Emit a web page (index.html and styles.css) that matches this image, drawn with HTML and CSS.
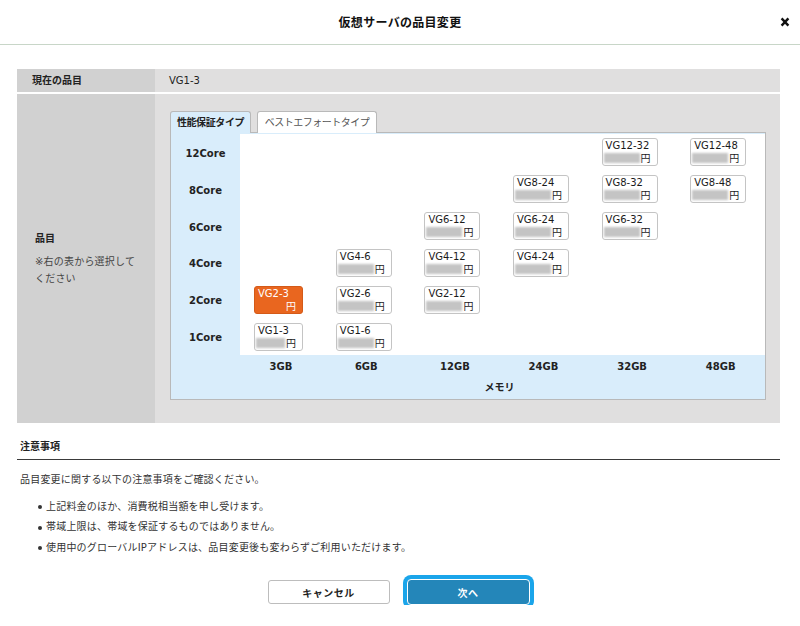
FILE: index.html
```html
<!DOCTYPE html>
<html lang="ja">
<head>
<meta charset="utf-8">
<title>仮想サーバの品目変更</title>
<link rel="stylesheet" href="styles.css">
</head>
<body>
<div class="dialog">
  <header class="dlg-head">
    <h1 class="dlg-title">仮想サーバの品目変更</h1>
    <button class="dlg-close" type="button" aria-label="閉じる">
      <svg width="10" height="10" viewBox="0 0 10 10"><path d="M1.6 1.4 L8.4 8.6 M8.4 1.4 L1.6 8.6" stroke="#111" stroke-width="2.4" stroke-linecap="butt" fill="none"/></svg>
    </button>
  </header>

  <main class="dlg-body">
    <div class="form-table">
      <div class="ft-row ft-row-current">
        <div class="ft-th">現在の品目</div>
        <div class="ft-td">VG1-3</div>
      </div>
      <div class="ft-row ft-row-select">
        <div class="ft-th ft-th-select">
          <div class="th-title">品目</div>
          <div class="th-note">※右の表から選択して<br>ください</div>
        </div>
        <div class="ft-td ft-td-select">
          <div class="tabs">
            <div class="tab tab-active">性能保証タイプ</div>
            <div class="tab tab-wide">ベストエフォートタイプ</div>
          </div>
          <div class="matrix">
            <div class="mx-row">
              <div class="mx-label">12Core</div>
              <div class="mx-cell"></div>
              <div class="mx-cell"></div>
              <div class="mx-cell"></div>
              <div class="mx-cell"></div>
              <div class="mx-cell"><div class="sku"><div class="sku-name">VG12-32</div><div class="sku-price"><span class="sku-blur"></span><span class="sku-yen">円</span></div></div></div>
              <div class="mx-cell"><div class="sku"><div class="sku-name">VG12-48</div><div class="sku-price"><span class="sku-blur"></span><span class="sku-yen">円</span></div></div></div>
            </div>
            <div class="mx-row">
              <div class="mx-label">8Core</div>
              <div class="mx-cell"></div>
              <div class="mx-cell"></div>
              <div class="mx-cell"></div>
              <div class="mx-cell"><div class="sku"><div class="sku-name">VG8-24</div><div class="sku-price"><span class="sku-blur"></span><span class="sku-yen">円</span></div></div></div>
              <div class="mx-cell"><div class="sku"><div class="sku-name">VG8-32</div><div class="sku-price"><span class="sku-blur"></span><span class="sku-yen">円</span></div></div></div>
              <div class="mx-cell"><div class="sku"><div class="sku-name">VG8-48</div><div class="sku-price"><span class="sku-blur"></span><span class="sku-yen">円</span></div></div></div>
            </div>
            <div class="mx-row">
              <div class="mx-label">6Core</div>
              <div class="mx-cell"></div>
              <div class="mx-cell"></div>
              <div class="mx-cell"><div class="sku"><div class="sku-name">VG6-12</div><div class="sku-price"><span class="sku-blur"></span><span class="sku-yen">円</span></div></div></div>
              <div class="mx-cell"><div class="sku"><div class="sku-name">VG6-24</div><div class="sku-price"><span class="sku-blur"></span><span class="sku-yen">円</span></div></div></div>
              <div class="mx-cell"><div class="sku"><div class="sku-name">VG6-32</div><div class="sku-price"><span class="sku-blur"></span><span class="sku-yen">円</span></div></div></div>
              <div class="mx-cell"></div>
            </div>
            <div class="mx-row">
              <div class="mx-label">4Core</div>
              <div class="mx-cell"></div>
              <div class="mx-cell"><div class="sku"><div class="sku-name">VG4-6</div><div class="sku-price"><span class="sku-blur"></span><span class="sku-yen">円</span></div></div></div>
              <div class="mx-cell"><div class="sku"><div class="sku-name">VG4-12</div><div class="sku-price"><span class="sku-blur"></span><span class="sku-yen">円</span></div></div></div>
              <div class="mx-cell"><div class="sku"><div class="sku-name">VG4-24</div><div class="sku-price"><span class="sku-blur"></span><span class="sku-yen">円</span></div></div></div>
              <div class="mx-cell"></div>
              <div class="mx-cell"></div>
            </div>
            <div class="mx-row">
              <div class="mx-label">2Core</div>
              <div class="mx-cell"><div class="sku sku-narrow sku-selected"><div class="sku-name">VG2-3</div><div class="sku-price"><span class="sku-blur"></span><span class="sku-yen">円</span></div></div></div>
              <div class="mx-cell"><div class="sku"><div class="sku-name">VG2-6</div><div class="sku-price"><span class="sku-blur"></span><span class="sku-yen">円</span></div></div></div>
              <div class="mx-cell"><div class="sku"><div class="sku-name">VG2-12</div><div class="sku-price"><span class="sku-blur"></span><span class="sku-yen">円</span></div></div></div>
              <div class="mx-cell"></div>
              <div class="mx-cell"></div>
              <div class="mx-cell"></div>
            </div>
            <div class="mx-row">
              <div class="mx-label">1Core</div>
              <div class="mx-cell"><div class="sku sku-narrow"><div class="sku-name">VG1-3</div><div class="sku-price"><span class="sku-blur"></span><span class="sku-yen">円</span></div></div></div>
              <div class="mx-cell"><div class="sku"><div class="sku-name">VG1-6</div><div class="sku-price"><span class="sku-blur"></span><span class="sku-yen">円</span></div></div></div>
              <div class="mx-cell"></div>
              <div class="mx-cell"></div>
              <div class="mx-cell"></div>
              <div class="mx-cell"></div>
            </div>
            <div class="mx-axis">
              <div class="mx-axis-blank"></div>
              <div class="mx-gb">3GB</div>
              <div class="mx-gb">6GB</div>
              <div class="mx-gb">12GB</div>
              <div class="mx-gb">24GB</div>
              <div class="mx-gb">32GB</div>
              <div class="mx-gb">48GB</div>
            </div>
            <div class="mx-axis mx-axis-caption">
              <div class="mx-axis-blank"></div>
              <div class="mx-caption">メモリ</div>
            </div>
          </div>
        </div>
      </div>
    </div>

    <section class="notes">
      <h2 class="notes-title">注意事項</h2>
      <p class="notes-lead">品目変更に関する以下の注意事項をご確認ください。</p>
      <ul class="notes-list">
        <li>上記料金のほか、消費税相当額を申し受けます。</li>
        <li>帯域上限は、帯域を保証するものではありません。</li>
        <li>使用中のグローバルIPアドレスは、品目変更後も変わらずご利用いただけます。</li>
      </ul>
    </section>

    <div class="actions">
      <button class="btn btn-cancel" type="button">キャンセル</button>
      <button class="btn btn-next" type="button">次へ</button>
    </div>
  </main>
</div>
</body>
</html>
```

FILE: styles.css
```css
* { box-sizing: border-box; }

html, body {
  margin: 0;
  padding: 0;
  background: #fff;
}

body {
  width: 800px;
  font-family: "DejaVu Sans", "Noto Sans CJK JP", sans-serif;
  font-size: 10px;
  color: #222;
}

/* header */
.dlg-head {
  height: 45px;
  border-bottom: 1px solid #c8d6c8;
  display: grid;
  grid-template-columns: 1fr auto 1fr;
  align-items: center;
}

.dlg-title {
  grid-column: 2;
  margin: 0;
  font-family: "Noto Sans CJK JP", sans-serif;
  font-size: 12px;
  font-weight: bold;
  letter-spacing: 0.3px;
  line-height: 16px;
  color: #111;
}

.dlg-close {
  grid-column: 3;
  justify-self: end;
  margin: -1px 10px 0 0;
  padding: 0;
  border: 0;
  background: none;
  width: 10px;
  height: 10px;
  display: flex;
}

/* body */
.dlg-body {
  padding: 24px 20px 0 17px;
}

.form-table {
  display: flex;
  flex-direction: column;
  gap: 2px;
}

.ft-row {
  display: grid;
  grid-template-columns: 138px 1fr;
}

.ft-th {
  background: #d1d1d1;
  font-weight: bold;
  padding-left: 15px;
}

.ft-td {
  background: #e0dfdf;
  padding-left: 14px;
}

.ft-row-current {
  height: 23px;
  line-height: 23px;
}

.ft-th-select {
  display: flex;
  flex-direction: column;
  justify-content: center;
  padding-left: 18px;
  font-weight: normal;
}

.th-title {
  font-weight: bold;
  line-height: 17px;
  margin-bottom: 6px;
}

.th-note {
  line-height: 17px;
  color: #444;
  letter-spacing: 0.2px;
}

.ft-td-select {
  padding: 17px 14px 23px 15px;
}

/* tabs */
.tabs {
  display: flex;
  gap: 6px;
  height: 22px;
  margin-bottom: -1px;
  position: relative;
  z-index: 1;
}

.tab {
  width: 120px;
  height: 22px;
  border: 1px solid #b9b9b9;
  border-bottom: 0;
  border-radius: 3px 3px 0 0;
  background: #fff;
  color: #555;
  text-align: center;
  line-height: 21px;
  letter-spacing: -0.5px;
}

.tab-active {
  width: 81px;
  background: #d9edfb;
  color: #222;
  font-weight: bold;
  letter-spacing: -0.4px;
}

/* matrix */
.matrix {
  border: 1px solid #b9b9b9;
  background: #d9edfb;
  padding-top: 1px;
}

.mx-row,
.mx-axis {
  display: grid;
  grid-template-columns: 69px 82px repeat(5, 1fr);
}

.mx-row {
  height: 36.84px;
}

.mx-label {
  display: flex;
  align-items: center;
  justify-content: center;
  font-weight: bold;
  padding-top: 2px;
}

.mx-cell {
  background: #fff;
  display: flex;
  align-items: center;
  justify-content: center;
  padding-right: 5px;
}

.mx-axis {
  height: 23px;
  align-items: center;
}

.mx-gb {
  text-align: center;
  font-weight: bold;
}

.mx-axis-caption {
  height: 18px;
  margin-bottom: 3px;
}

.mx-caption {
  grid-column: 2 / -1;
  text-align: center;
  font-weight: bold;
  padding-right: 6px;
}

/* sku buttons */
.sku {
  width: 56px;
  height: 28px;
  border: 1px solid #c4c4c4;
  border-radius: 3px;
  background: #fff;
  padding: 1px 0;
  color: #1a1a1a;
}

.sku-narrow {
  width: 49px;
}

.sku-name {
  padding-left: 3px;
  line-height: 12px;
  white-space: nowrap;
}

.sku-price {
  display: flex;
  align-items: center;
  height: 12px;
  padding: 0 6px 0 1px;
}

.sku-blur {
  flex: 1;
  height: 10px;
  background: #c4c4c4;
  filter: blur(0.8px);
  margin-right: 1px;
}

.sku-yen {
  font-family: "Noto Sans CJK JP", sans-serif;
  line-height: 12px;
}

.sku-selected {
  background: #e9661f;
  border-color: #d45a18;
  color: #fff;
}

.sku-selected .sku-blur {
  background: transparent;
}

/* notes */
.notes {
  margin-top: 16px;
  color: #333;
}

.notes-title {
  margin: 0;
  font-size: 10px;
  font-weight: bold;
  line-height: 16px;
  padding: 0 3px 4px;
  border-bottom: 1px solid #3a3a3a;
  color: #222;
}

.notes-lead {
  margin: 10px 0 0 3px;
  line-height: 20px;
  letter-spacing: 0.2px;
}

.notes-list {
  list-style: none;
  margin: 7px 0 0;
  padding-left: 21px;
}

.notes-list li {
  display: flex;
  align-items: center;
  gap: 4px;
  line-height: 20.5px;
  letter-spacing: 0.2px;
}

.notes-list li::before {
  content: "";
  width: 4px;
  height: 4px;
  border-radius: 50%;
  background: #333;
  flex: none;
}

/* actions */
.actions {
  display: flex;
  justify-content: center;
  align-items: center;
  gap: 17px;
  margin-top: 21px;
}

.btn {
  font-family: "Noto Sans CJK JP", sans-serif;
  font-size: 10px;
  font-weight: bold;
  border-radius: 3px;
  padding: 0;
  cursor: pointer;
}

.btn-cancel {
  width: 122px;
  height: 24px;
  border: 1px solid #bdbdbd;
  background: #fff;
  color: #222;
  letter-spacing: 0.5px;
}

.btn-next {
  width: 123px;
  height: 26px;
  border: 1px solid #fff;
  background: #2486b9;
  color: #fff;
  box-shadow: 0 0 0 4px #1aa5ea;
  border-radius: 4px;
  letter-spacing: 0.5px;
}
```
